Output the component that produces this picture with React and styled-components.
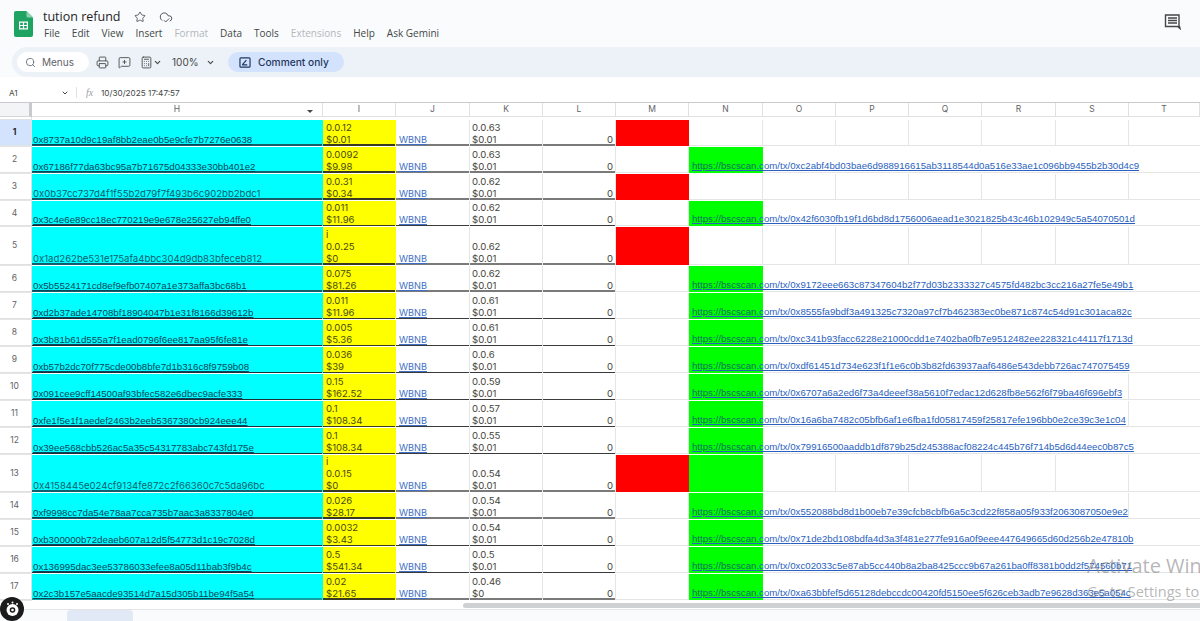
import React from "react";
import styled, { createGlobalStyle } from "styled-components";
import { Search, Printer, MessageSquarePlus, Star, CloudCheck, ChevronDown, Calculator, Menu } from "lucide-react";

const Global = createGlobalStyle`
  html, body { margin: 0; padding: 0; height: 100%; overflow: hidden; background: #f9fbfd; }
  #root { height: 621px; }
  * { box-sizing: border-box; }
`;

const Page = styled.div`
  position: relative;
  width: 1200px;
  height: 621px;
  overflow: hidden;
  background: #f9fbfd;
  font-family: "Inter", "Liberation Sans", sans-serif;
  display: flex;
  flex-direction: column;
  & > * { flex-shrink: 0; }
`;
const TitleBar = styled.div`
  height: 47px;
  display: flex;
  align-items: flex-start;
  padding: 9px 19px 0 14px;
  gap: 10px;
`;
const LogoSlot = styled.div`
  margin-top: 2px;
  height: 26px;
`;
const TitleStack = styled.div`
  display: flex;
  flex-direction: column;
  flex: 1;
`;
const TitleLine = styled.div`
  display: flex;
  align-items: center;
  height: 15px;
  gap: 13px;
  color: #3c4043;
`;
const DocName = styled.span`
  font-family: "Open Sans", sans-serif;
  font-size: 12.5px;
  color: #1f1f1f;
  width: 78px;
  white-space: nowrap;
`;
const MenuLine = styled.div`
  display: flex;
  gap: 12px;
  margin-top: 2px;
  padding-left: 1px;
  font-family: "Open Sans", sans-serif;
  font-size: 10px;
  line-height: 14px;
`;
const MenuItem = styled.span`
  color: ${(p) => (p.$off ? "#b4b7ba" : "#444746")};
  white-space: nowrap;
`;
const CommentIcon = styled.svg`
  width: 17px;
  height: 17px;
  margin-top: 4px;
`;
const Toolbar = styled.div`
  height: 30px;
  margin-left: 12px;
  background: #edf2f8;
  border-radius: 15px 0 0 15px;
  display: flex;
  align-items: center;
  padding-left: 5px;
  color: #444746;
`;
const SearchPill = styled.div`
  width: 72px;
  height: 20px;
  background: #ffffff;
  border-radius: 10px;
  display: flex;
  align-items: center;
  gap: 6px;
  padding-left: 8px;
  font-size: 10px;
  color: #5f6368;
  margin-right: 7px;
`;
const ToolIcons = styled.div`
  display: flex;
  align-items: center;
  gap: 9px;
  width: 44px;
`;
const CalcGroup = styled.div`
  display: flex;
  align-items: center;
  width: 23px;
`;
const Zoom = styled.div`
  display: flex;
  align-items: center;
  font-size: 10px;
  width: 56px;
  margin-left: 9px;
  gap: 7px;
  color: #444746;
`;
const ModeButton = styled.div`
  width: 116px;
  height: 20px;
  background: #d3e3fd;
  border-radius: 10px;
  display: flex;
  align-items: center;
  gap: 7px;
  padding-left: 11px;
  font-size: 10.2px;
  font-weight: 500;
  color: #1f3760;
`;
const FormulaBar = styled.div`
  height: 26px;
  background: #ffffff;
  display: flex;
  align-items: center;
  padding: 6px 0 0 9px;
  border-bottom: 1px solid #c9cbce;
  font-size: 8.2px;
  color: #444746;
`;
const CellRef = styled.div`
  width: 60px;
  display: flex;
  justify-content: space-between;
  align-items: center;
`;
const Fx = styled.span`
  margin-left: 7px;
  width: 25px;
  font-family: "Liberation Serif", serif;
  font-style: italic;
  font-size: 10px;
  color: #9aa0a6;
  border-left: 1px solid #e0e2e5;
  padding-left: 9px;
`;
const Sheet = styled.div`
  display: flex;
  flex-direction: column;
  background: #fff;
`;
const Row = styled.div`
  display: grid;
  grid-template-columns: 32px 291px 73px 74px 73px 73px 73px 74px 73px 73px 73px 74px 73px 71px;
  height: ${(p) => p.$h}px;
`;
const CornerCell = styled.div`
  background: #f3f4f5;
  border-right: 3px solid #c8cacd;
  border-bottom: 1px solid #d4d6d8;
`;
const ColHead = styled.div`
  display: flex;
  align-items: center;
  justify-content: center;
  position: relative;
  font-size: 8.5px;
  color: #5f6368;
  border-right: 1px solid #dfe1e3;
  border-bottom: 1px solid #dfe1e3;
`;
const FilterMark = styled.i`
  position: absolute;
  right: 9px;
  top: 7px;
  border-left: 3px solid transparent;
  border-right: 3px solid transparent;
  border-top: 3px solid #444746;
`;
const RowHead = styled.div`
  display: flex;
  align-items: center;
  justify-content: center;
  padding-right: 2px;
  font-size: 8.5px;
  font-weight: ${(p) => (p.$on ? 700 : 400)};
  color: ${(p) => (p.$on ? "#1f1f1f" : "#5f6368")};
  background: ${(p) => (p.$on ? "#d3e3fd" : "#fff")};
  border-right: 1px solid #dfe1e3;
  border-bottom: 1px solid #dfe1e3;
`;
const Cell = styled.div`
  position: relative;
  display: flex;
  flex-direction: column;
  justify-content: flex-end;
  padding: 0 2px 0 2px;
  min-width: 0;
  font-size: 9.6px;
  line-height: 12px;
  color: #46463a;
  background: ${(p) => p.$bg || "transparent"};
  border-right: ${(p) => (p.$noRight ? "0" : `1px solid ${p.$bg ? "transparent" : "#e4e5e6"}`)};
  box-shadow: inset 0 -${(p) => p.$lineW || 1}px 0 ${(p) => p.$strong || (p.$bg ? "transparent" : "#e4e5e6")};
`;
const ValueCell = styled(Cell)`
  padding-left: 3px;
  color: #4a4a12;
`;
const Address = styled.a`
  font-family: ${(p) => (p.$round ? '"Inter", sans-serif' : '"Liberation Sans", sans-serif')};
  font-size: ${(p) => (p.$round ? "9.55px" : "9.7px")};
  color: ${(p) => (p.$round ? "#0e5c6e" : "#08455a")};
  text-decoration: underline;
  margin-left: -1px;
  white-space: nowrap;
`;
const Plain = styled.div`
  white-space: nowrap;
`;
const RightValue = styled.div`
  text-align: right;
`;
const Wbnb = styled.a`
  font-size: 9.2px;
  color: #3f6fc4;
  text-decoration: underline;
  padding-left: 1px;
`;
const TxLink = styled.a`
  position: absolute;
  left: 3px;
  bottom: 1px;
  font-family: "Liberation Sans", sans-serif;
  font-size: 9.66px;
  line-height: 12px;
  color: #2a5fc0;
  text-decoration: underline;
  white-space: nowrap;
  z-index: 2;
`;
const HttpPart = styled.span`
  color: #0a6f62;
`;
const ScrollArea = styled.div`
  height: 9px;
  display: flex;
  background: #fff;
  padding-top: 2px;
  border-bottom: 1px solid #e3e5e7;
`;
const ScrollThumb = styled.div`
  margin-left: 463px;
  flex: 1;
  height: 5px;
  background: #cfd0d1;
  border-radius: 3px 0 0 3px;
`;
const TabBar = styled.div`
  height: 11px;
  display: flex;
  align-items: flex-start;
  padding-left: 38px;
  gap: 18px;
  color: #5f6368;
  overflow: hidden;
`;
const TabMenu = styled.div`
  margin-top: 8px;
  height: 11px;
`;
const SheetTab = styled.div`
  width: 66px;
  height: 11px;
  background: #e1e9f7;
  border-radius: 3px 3px 0 0;
`;
const A11yBadge = styled.div`
  position: absolute;
  left: 0;
  top: 597px;
  width: 24px;
  height: 24px;
  border-radius: 50%;
  background: #1b1b1b;
  display: flex;
  align-items: center;
  justify-content: center;
  z-index: 5;
`;
const Watermark = styled.div`
  position: absolute;
  left: 1087px;
  top: 552px;
  white-space: nowrap;
  font-family: "Open Sans", sans-serif;
  color: rgba(120, 120, 120, 0.55);
  font-size: 20px;
  line-height: 27px;
  z-index: 6;
`;
const WatermarkSub = styled.div`
  font-size: 14.5px;
  line-height: 24px;
  margin-top: 1px;
`;

const COLS = "HIJKLMNOPQRST".split("");
const rows = [
  { n: 1, h: 27, addr: "0x8737a10d9c19af8bb2eae0b5e9cfe7b7276e0638", a: ["0.0.12", "$0.01"], k: ["0.0.63", "$0.01"], red: true, line: "#14606a" },
  { n: 2, h: 27, addr: "0x67186f77da63bc95a7b71675d04333e30bb401e2", a: ["0.0092", "$9.98"], k: ["0.0.63", "$0.01"], tx: "0xc2abf4bd03bae6d988916615ab3118544d0a516e33ae1c096bb9455b2b30d4c9", line: "#14606a" },
  { n: 3, h: 27, addr: "0x0b37cc737d4f1f55b2d79f7f493b6c902bb2bdc1", round: true, a: ["0.0.31", "$0.34"], k: ["0.0.62", "$0.01"], red: true, line: "#14606a" },
  { n: 4, h: 26, addr: "0x3c4e6e89cc18ec770219e9e678e25627eb94ffe0", a: ["0.011", "$11.96"], k: ["0.0.62", "$0.01"], tx: "0x42f6030fb19f1d6bd8d1756006aead1e3021825b43c46b102949c5a54070501d", thin: true },
  { n: 5, h: 39, addr: "0x1ad262be531e175afa4bbc304d9db83bfeceb812", round: true, a: ["i", "0.0.25", "$0"], k: ["0.0.62", "$0.01"], red: true, line: "#14606a" },
  { n: 6, h: 27, addr: "0x5b5524171cd8ef9efb07407a1e373affa3bc68b1", a: ["0.075", "$81.26"], k: ["0.0.62", "$0.01"], tx: "0x9172eee663c87347604b2f77d03b2333327c4575fd482bc3cc216a27fe5e49b1", line: "#14606a" },
  { n: 7, h: 27, addr: "0xd2b37ade14708bf18904047b1e31f8166d39612b", a: ["0.011", "$11.96"], k: ["0.0.61", "$0.01"], tx: "0x8555fa9bdf3a491325c7320a97cf7b462383ec0be871c874c54d91c301aca82c", thin: true },
  { n: 8, h: 27, addr: "0x3b81b61d555a7f1ead0796f6ee817aa95f6fe81e", a: ["0.005", "$5.36"], k: ["0.0.61", "$0.01"], tx: "0xc341b93facc6228e21000cdd1e7402ba0fb7e9512482ee228321c44117f1713d", thin: true },
  { n: 9, h: 27, addr: "0xb57b2dc70f775cde00b8bfe7d1b316c8f9759b08", a: ["0.036", "$39"], k: ["0.0.6", "$0.01"], tx: "0xdf61451d734e623f1f1e6c0b3b82fd63937aaf6486e543debb726ac747075459", thin: true },
  { n: 10, h: 27, addr: "0x091cee9cff14500af93bfec582e6dbec9acfe333", a: ["0.15", "$162.52"], k: ["0.0.59", "$0.01"], tx: "0x6707a6a2ed6f73a4deeef38a5610f7edac12d628fb8e562f6f79ba46f696ebf3", end: true, thin: true },
  { n: 11, h: 27, addr: "0xfe1f5e1f1aedef2463b2eeb5367380cb924eee44", a: ["0.1", "$108.34"], k: ["0.0.57", "$0.01"], tx: "0x16a6ba7482c05bfb6af1e6fba1fd05817459f25817efe196bb0e2ce39c3e1c04", end: true, thin: true },
  { n: 12, h: 27, addr: "0x39ee568cbb526ac5a35c54317783abc743fd175e", a: ["0.1", "$108.34"], k: ["0.0.55", "$0.01"], tx: "0x79916500aaddb1df879b25d245388acf08224c445b76f714b5d6d44eec0b87c5", thin: true },
  { n: 13, h: 38, addr: "0x4158445e024cf9134fe872c2f66360c7c5da96bc", round: true, a: ["i", "0.0.15", "$0"], k: ["0.0.54", "$0.01"], red: true, green: true, line: "#14606a" },
  { n: 14, h: 27, addr: "0xf9998cc7da54e78aa7cca735b7aac3a8337804e0", a: ["0.026", "$28.17"], k: ["0.0.54", "$0.01"], tx: "0x552088bd8d1b00eb7e39cfcb8cbfb6a5c3cd22f858a05f933f2063087050e9e2", end: true, line: "#14606a" },
  { n: 15, h: 27, addr: "0xb300000b72deaeb607a12d5f54773d1c19c7028d", a: ["0.0032", "$3.43"], k: ["0.0.54", "$0.01"], tx: "0x71de2bd108bdfa4d3a3f481e277fe916a0f9eee447649665d60d256b2e47810b", thin: true },
  { n: 16, h: 27, addr: "0x136995dac3ee53786033efee8a05d11bab3f9b4c", a: ["0.5", "$541.34"], k: ["0.0.5", "$0.01"], tx: "0xc02033c5e87ab5cc440b8a2ba8425ccc9b67a261ba0ff8381b0dd2f574560b71", thin: true },
  { n: 17, h: 27, addr: "0x2c3b157e5aacde93514d7a15d305b11be94f5a54", a: ["0.02", "$21.65"], k: ["0.0.46", "$0"], tx: "0xa63bbfef5d65128debccdc00420fd5150ee5f626ceb3adb7e9628d363e5a054c", line: "#14a0a0" },
];

const MENUS = [["File"], ["Edit"], ["View"], ["Insert"], ["Format", true], ["Data"], ["Tools"], ["Extensions", true], ["Help"], ["Ask Gemini"]];

function SheetsLogo() {
  return (
    <svg width="19" height="26" viewBox="0 0 19 26">
      <path d="M2 0h10.500L19 6.500V24a2 2 0 0 1-2 2H2a2 2 0 0 1-2-2V2a2 2 0 0 1 2-2z" fill="#1ea362" />
      <path d="M12.500 0L19 6.500h-5a1.500 1.500 0 0 1-1.500-1.500z" fill="#8ed1b1" />
      <path d="M5 10.500h9v8H5z M6.200 11.700v2.200h2.700v-2.200z M10.100 11.700v2.200h2.700v-2.200z M6.200 15.100v2.200h2.700v-2.200z M10.100 15.100v2.200h2.700v-2.200z" fill="#fff" fillRule="evenodd" />
    </svg>
  );
}

function SheetRow({ r }) {
  const overflow = !!r.tx;
  const lineW = r.thin ? 1 : 2;
  const grey = r.thin ? "#3a3a3a" : "#7a7a7a";
  return (
    <Row $h={r.h}>
      <RowHead $on={r.n === 1}>{r.n}</RowHead>
      <Cell $bg="#00ffff" $strong={r.thin ? "#1a3038" : r.line} $lineW={lineW}>
        <Address $round={r.round}>{r.addr}</Address>
      </Cell>
      <ValueCell $bg="#ffff00" $strong="#3a3a20" $lineW={lineW}>
        {r.a.map((t) => <Plain key={t}>{t}</Plain>)}
      </ValueCell>
      <Cell $strong={grey} $lineW={lineW}><Wbnb>WBNB</Wbnb></Cell>
      <Cell $strong={grey} $lineW={lineW}>{r.k.map((t) => <Plain key={t}>{t}</Plain>)}</Cell>
      <Cell $strong={grey} $lineW={lineW}><RightValue>0</RightValue></Cell>
      <Cell $bg={r.red ? "#ff0000" : undefined} />
      <Cell $bg={r.green || r.tx ? "#00ff00" : undefined} $noRight={overflow}>
        {r.tx && (
          <TxLink><HttpPart>https://bscscan</HttpPart>.com/tx/{r.tx}</TxLink>
        )}
      </Cell>
      {["O", "P", "Q", "R"].map((c) => <Cell key={c} $noRight={overflow} />)}
      <Cell $noRight={overflow && !r.end} />
      <Cell $noRight />
      <Cell $noRight />
    </Row>
  );
}

export default function App() {
  return (
    <Page>
      <Global />
      <TitleBar>
        <LogoSlot><SheetsLogo /></LogoSlot>
        <TitleStack>
          <TitleLine>
            <DocName>tution refund</DocName>
            <Star size={12} strokeWidth={1.6} />
            <CloudCheck size={14} strokeWidth={1.5} />
          </TitleLine>
          <MenuLine>
            {MENUS.map(([m, off]) => <MenuItem key={m} $off={off}>{m}</MenuItem>)}
          </MenuLine>
        </TitleStack>
        <CommentIcon viewBox="0 0 17 17" fill="none" stroke="#444746" strokeWidth="1.4">
          <path d="M1.500 2h13.500v11.500h0.500l0.500 2-2.500-2H1.500z" />
          <path d="M4 5h9M4 7.500h9M4 10h9" />
        </CommentIcon>
      </TitleBar>
      <Toolbar>
        <SearchPill><Search size={11} strokeWidth={1.8} />Menus</SearchPill>
        <ToolIcons>
          <Printer size={13} strokeWidth={1.6} />
          <MessageSquarePlus size={13} strokeWidth={1.6} />
        </ToolIcons>
        <CalcGroup>
          <Calculator size={13} strokeWidth={1.6} />
          <ChevronDown size={9} strokeWidth={3} />
        </CalcGroup>
        <Zoom>100%<ChevronDown size={9} strokeWidth={3} /></Zoom>
        <ModeButton>
          <svg width="12" height="11" viewBox="0 0 13 12" fill="none" stroke="#1f3760" strokeWidth="1.3">
            <rect x="1" y="1" width="11" height="10" rx="1" />
            <path d="M3.500 8.500L8 3.500M3.500 8.500h5.500" />
          </svg>
          Comment only
        </ModeButton>
      </Toolbar>
      <FormulaBar>
        <CellRef>A1<ChevronDown size={8} strokeWidth={3} /></CellRef>
        <Fx>fx</Fx>
        10/30/2025 17:47:57
      </FormulaBar>
      <Sheet>
        <Row $h={17}>
          <CornerCell />
          {COLS.map((c) => (
            <ColHead key={c}>{c}{c === "H" && <FilterMark />}</ColHead>
          ))}
          <ColHead />
        </Row>
        {rows.map((r) => <SheetRow key={r.n} r={r} />)}
      </Sheet>
      <ScrollArea><ScrollThumb /></ScrollArea>
      <TabBar>
        <TabMenu><Menu size={11} strokeWidth={1.6} /></TabMenu>
        <SheetTab />
      </TabBar>
      <A11yBadge>
        <svg width="17" height="17" viewBox="0 0 17 17">
          <circle cx="8.500" cy="9" r="6" fill="#fff" />
          <circle cx="8.500" cy="9" r="2.800" fill="#1b1b1b" />
          <circle cx="8.500" cy="9" r="1.300" fill="#fff" />
          <circle cx="4" cy="3" r="1" fill="#fff" />
          <circle cx="8.500" cy="1.500" r="1" fill="#fff" />
          <circle cx="13" cy="3" r="1" fill="#fff" />
        </svg>
      </A11yBadge>
      <Watermark>
        Activate Windows
        <WatermarkSub>Go to Settings to activate Windows.</WatermarkSub>
      </Watermark>
    </Page>
  );
}
